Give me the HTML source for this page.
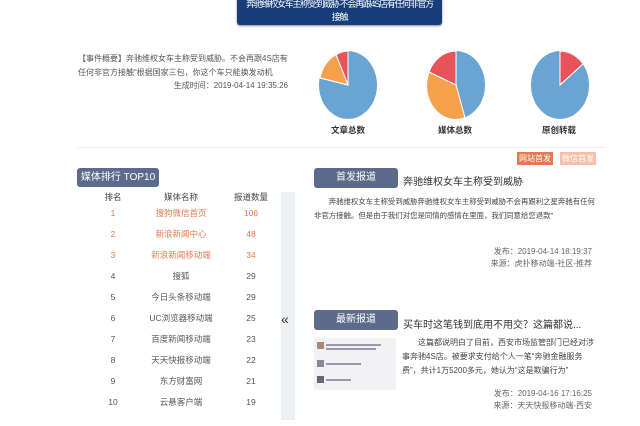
<!DOCTYPE html>
<html><head><meta charset="utf-8"><style>
body{margin:0;width:640px;height:426px;background:#fff;font-family:"Liberation Sans","Noto Sans CJK SC",sans-serif;position:relative;overflow:hidden;color:#555}
.a{position:absolute;white-space:nowrap}
.banner{left:237px;top:-10px;width:205px;height:35px;background:#173e7a;color:#fff;font-size:9px;letter-spacing:-1.3px;line-height:13px;padding-top:8px;box-sizing:border-box;text-align:center;border-radius:0 0 3px 3px;box-shadow:0 1px 2px #889}
.btn{background:#5c6b8c;color:#fff;font-size:10px;text-align:center;border-radius:3px}
.row{left:95px;width:180px;font-size:8.5px;height:21px;line-height:21px}
.row span{position:absolute;text-align:center}
.c1{left:0;width:36px}.c2{left:46px;width:80px}.c3{left:136px;width:40px}
.o{color:#e07a50}
</style></head><body>
<div class="a banner">奔驰维权女车主称受到威胁 不会再跟4S店有任何非官方<br>接触</div>
<div class="a" style="left:78px;top:52px;width:212px;white-space:normal;font-size:8px;line-height:14px;color:#555">【事件概要】奔驰维权女车主称受到威胁。不会再跟4S店有任何非官方接触“根据国家三包，你这个车只能换发动机</div>
<div class="a" style="left:170px;top:80px;width:118px;text-align:right;font-size:8px;color:#555">生成时间：2019-04-14 19:35:26</div>
<svg class="a" style="left:300px;top:42px" width="310" height="90">
<g transform="translate(48,43) scale(1,1.17)"><circle r="29" fill="#6aa4d2"/><path d="M0 0L0 -29A29 29 0 0 0 -12 -26Z" fill="#e8525a" stroke="#fff"/><path d="M0 0L-12 -26A29 29 0 0 0 -28 -6Z" fill="#f5a14c" stroke="#fff"/></g>
<g transform="translate(156,43) scale(1,1.17)"><circle r="29" fill="#6aa4d2"/><path d="M0 0L0 -29A29 29 0 0 0 -27 -11Z" fill="#e8525a" stroke="#fff"/><path d="M0 0L-27 -11A29 29 0 0 0 9 28Z" fill="#f5a14c" stroke="#fff"/></g>
<g transform="translate(260,43) scale(1,1.17)"><circle r="29" fill="#6aa4d2"/><path d="M0 0L0 -29A29 29 0 0 1 23 -18Z" fill="#e8525a" stroke="#fff"/></g>
</svg>
<div class="a" style="left:331px;top:124px;font-size:8.5px;color:#333;font-weight:bold">文章总数</div>
<div class="a" style="left:438px;top:124px;font-size:8.5px;color:#333;font-weight:bold">媒体总数</div>
<div class="a" style="left:542px;top:124px;font-size:8.5px;color:#333;font-weight:bold">原创转载</div>
<div class="a" style="left:77px;top:147px;width:528px;height:1px;background:#f0f0f0"></div>

<div class="a btn" style="left:77px;top:168px;width:82px;height:19px;line-height:19px">媒体排行 TOP10</div>
<div class="a" style="left:281px;top:192px;width:14px;height:228px;background:#eef0f4"></div>
<div class="a" style="left:281px;top:311px;font-size:14px;color:#333">«</div>
<div class="a row" style="top:187px;color:#444"><span class="c1">排名</span><span class="c2">媒体名称</span><span class="c3">报道数量</span></div>
<div class="a row o" style="top:203px"><span class="c1">1</span><span class="c2">搜狗微信首页</span><span class="c3">106</span></div>
<div class="a row o" style="top:224px"><span class="c1">2</span><span class="c2">新浪新闻中心</span><span class="c3">48</span></div>
<div class="a row o" style="top:245px"><span class="c1">3</span><span class="c2">新浪新闻移动端</span><span class="c3">34</span></div>
<div class="a row" style="top:266px"><span class="c1">4</span><span class="c2">搜狐</span><span class="c3">29</span></div>
<div class="a row" style="top:287px"><span class="c1">5</span><span class="c2">今日头条移动端</span><span class="c3">29</span></div>
<div class="a row" style="top:308px"><span class="c1">6</span><span class="c2">UC浏览器移动端</span><span class="c3">25</span></div>
<div class="a row" style="top:329px"><span class="c1">7</span><span class="c2">百度新闻移动端</span><span class="c3">23</span></div>
<div class="a row" style="top:350px"><span class="c1">8</span><span class="c2">天天快报移动端</span><span class="c3">22</span></div>
<div class="a row" style="top:371px"><span class="c1">9</span><span class="c2">东方财富网</span><span class="c3">21</span></div>
<div class="a row" style="top:392px"><span class="c1">10</span><span class="c2">云悬客户端</span><span class="c3">19</span></div>

<div class="a" style="left:517px;top:152px;width:36px;height:13px;line-height:13px;background:#e07a50;color:#fff;font-size:8px;text-align:center">网站首发</div>
<div class="a" style="left:560px;top:152px;width:36px;height:13px;line-height:13px;background:#f3c0aa;color:#fff;font-size:8px;text-align:center">微信首发</div>
<div class="a btn" style="left:314px;top:168px;width:84px;height:20px;line-height:20px">首发报道</div>
<div class="a" style="left:403px;top:173px;font-size:10px;color:#333">奔驰维权女车主称受到威胁</div>
<div class="a" style="left:314px;top:195px;width:282px;white-space:normal;font-size:7.4px;line-height:14px;text-indent:2em;color:#444">奔驰维权女车主称受到威胁奔驰维权女车主称受到威胁不会再跟利之星奔驰有任何非官方接触。但是由于我们对您是同情的感情在里面，我们同意给您退款”</div>
<div class="a" style="left:450px;top:246px;width:142px;text-align:right;font-size:8px;line-height:12px;color:#666">发布：2019-04-14 18:19:37<br>来源：虎扑移动端-社区-推荐</div>
<div class="a btn" style="left:314px;top:310px;width:84px;height:20px;line-height:20px">最新报道</div>
<div class="a" style="left:403px;top:316px;font-size:10px;color:#333">买车时这笔钱到底用不用交？这篇都说...</div>
<div class="a" style="left:314px;top:338px;width:82px;height:52px;background:#f2f2f4">
<div style="position:absolute;left:3px;top:4px;width:7px;height:7px;background:#a87"></div><div style="position:absolute;left:12px;top:6px;width:55px;height:2px;background:#99a"></div><div style="position:absolute;left:12px;top:10px;width:50px;height:2px;background:#99a"></div>
<div style="position:absolute;left:3px;top:22px;width:7px;height:7px;background:#889"></div><div style="position:absolute;left:12px;top:25px;width:35px;height:2px;background:#99a"></div>
<div style="position:absolute;left:3px;top:38px;width:7px;height:7px;background:#667"></div><div style="position:absolute;left:12px;top:41px;width:25px;height:2px;background:#99a"></div></div>
<div class="a" style="left:402px;top:336px;width:192px;white-space:normal;font-size:8px;line-height:14px;text-indent:2em;color:#444">这篇都说明白了目前，西安市场监管部门已经对涉事奔驰4S店。被要求支付给个人一笔“奔驰金融服务费”，共计1万5200多元，她认为“这是欺骗行为”</div>
<div class="a" style="left:450px;top:388px;width:142px;text-align:right;font-size:8px;line-height:12px;color:#666">发布：2019-04-16 17:16:25<br>来源：天天快报移动端-西安</div>
</body></html>
